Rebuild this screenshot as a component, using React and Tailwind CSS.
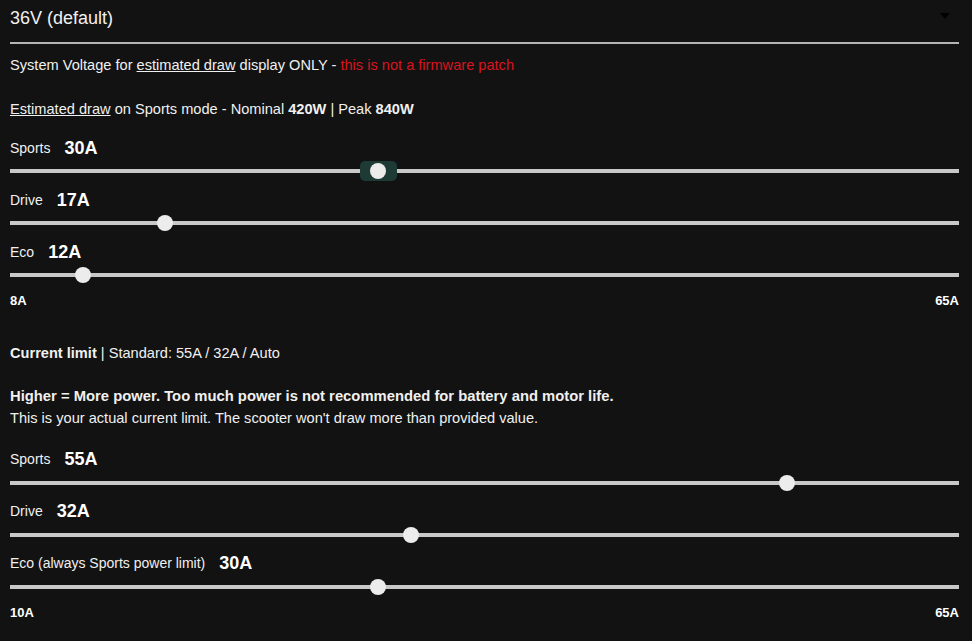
import React from "react";

const MIN = 8;
const MAX = 65;

const Slider = ({ label, value, focused }) => {
  const frac = (value - MIN) / (MAX - MIN);
  return (
    <div className="mb-[11px]">
      <div className="flex items-center h-[20px]">
        <span className="text-[14px] text-[#f0f0f0]">{label}</span>
        <span className="ml-[14px] text-[18px] font-bold text-white">{value}A</span>
      </div>
      <div className="relative h-[16px] mt-[5px]">
        <div className="absolute left-0 right-0 top-[6px] h-[4px] bg-[#c8c8c8]" />
        <div
          className="absolute top-0 w-[16px] h-[16px]"
          style={{ left: `calc(${frac} * (100% - 16px))` }}
        >
          {focused && (
            <div className="absolute left-[-10px] top-[-2px] w-[37px] h-[20px] rounded-[5px] bg-[#1d3a35]" />
          )}
          <div className="absolute inset-0 rounded-full bg-[#ececec]" />
        </div>
      </div>
    </div>
  );
};

const RangeLabels = ({ min, max }) => (
  <div className="flex justify-between text-[13px] font-bold text-white -mt-[3px]">
    <span>{min}</span>
    <span>{max}</span>
  </div>
);

export default function App() {
  return (
    <div
      className="min-h-[641px] bg-[#121212] text-[#f0f0f0] pl-[10px] pr-[13px]"
      style={{ fontFamily: '"Liberation Sans", Arial, sans-serif' }}
    >
      <div className="relative h-[44px] flex items-center border-b-2 border-[#b4b4b4] pb-[6px]">
        <span className="text-[18px] text-[#f0f0f0]">36V (default)</span>
        <svg className="absolute right-[9px] top-[13px]" width="10" height="6" viewBox="0 0 10 6">
          <path d="M0 0 L10 0 L5 6 Z" fill="#000" />
        </svg>
      </div>

      <p className="text-[14.6px] mt-[12px] leading-[18px]">
        System Voltage for <span className="underline">estimated draw</span> display ONLY -{" "}
        <span className="text-[#d8141e]">this is not a firmware patch</span>
      </p>

      <p className="text-[14.6px] mt-[26px] leading-[18px]">
        <span className="underline">Estimated draw</span> on Sports mode - Nominal <b>420W</b> | Peak <b>840W</b>
      </p>

      <div className="mt-[20px]">
        <Slider label="Sports" value={30} focused />
        <Slider label="Drive" value={17} />
        <Slider label="Eco" value={12} />
        <RangeLabels min="8A" max="65A" />
      </div>

      <p className="text-[14.6px] mt-[33px] leading-[18px]">
        <b>Current limit</b> | Standard: 55A / 32A / Auto
      </p>

      <p className="text-[14.6px] mt-[23px] leading-[22px]">
        <b className="text-[14.8px]">Higher = More power. Too much power is not recommended for battery and motor life.</b>
        <br />
        This is your actual current limit. The scooter won't draw more than provided value.
      </p>

      <div className="mt-[21px]">
        <Slider label="Sports" value={55} />
        <Slider label="Drive" value={32} />
        <Slider label="Eco (always Sports power limit)" value={30} />
        <RangeLabels min="10A" max="65A" />
      </div>
    </div>
  );
}
